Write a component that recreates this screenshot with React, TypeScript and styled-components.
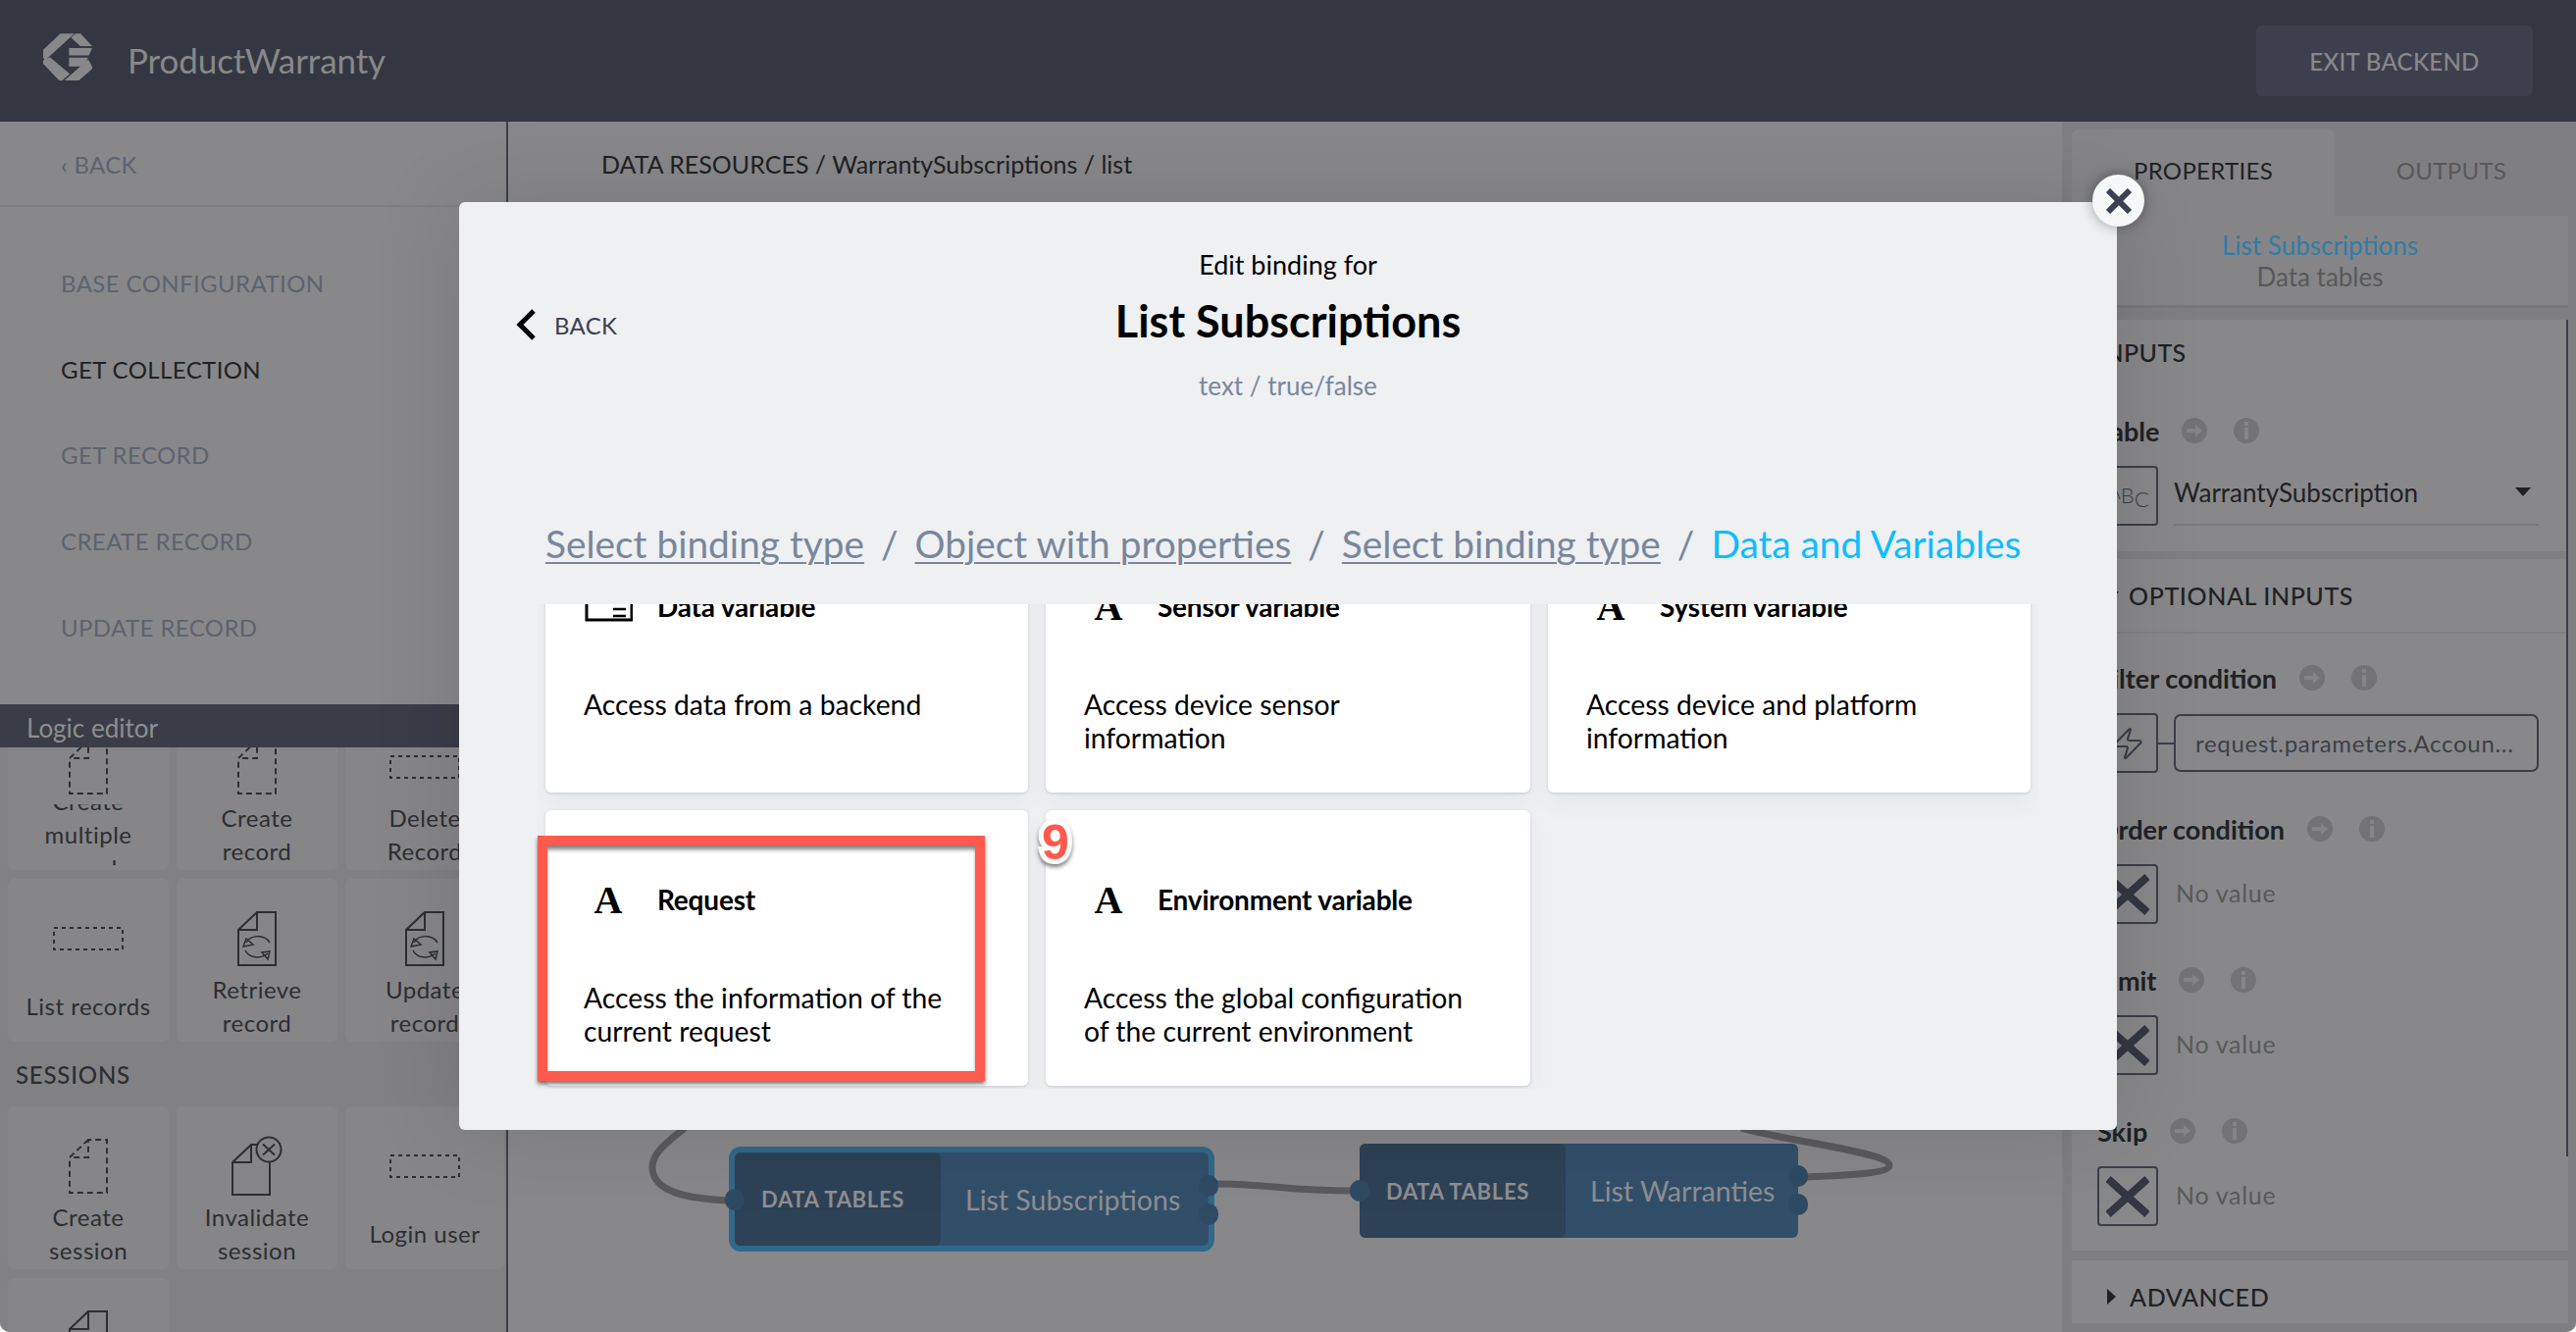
import React from 'react';
import styled, { createGlobalStyle } from 'styled-components';
import { Zap } from 'lucide-react';

const Global = createGlobalStyle`
  html, body { margin: 0; padding: 0; background: #fff; }
  * { box-sizing: border-box; }
  body { font-family: Lato, "Liberation Sans", sans-serif; }
`;

const Page = styled.div`
  position: relative; width: 2626px; height: 1358px; overflow: hidden;
  display: flex; flex-direction: column; background: #88888a;
  border-radius: 0 0 10px 10px; color: #202124;
`;
const Header = styled.header`
  height: 124px; flex: none; background: #343741; display: flex; align-items: center;
  padding: 0 44px 0 42px;
`;
const LogoMark = styled.svg`margin-top: -8px; flex: none; display: block;`;
const Brand = styled.div`font-size: 35px; color: #88888a; margin-left: 34px; letter-spacing: -0.1px; flex: 1; padding-bottom: 2px;`;
const ExitButton = styled.div`
  width: 282px; height: 72px; border-radius: 6px; background: #3d404c; color: #88888a;
  display: flex; align-items: center; justify-content: center; font-size: 24px; letter-spacing: .3px; font-weight: 500;
`;
const Body = styled.div`display: flex; flex: 1; min-height: 0;`;
const Sidebar = styled.aside`
  width: 518px; flex: none; display: flex; flex-direction: column; border-right: 2px solid #3d404c;
`;
const SideNav = styled.nav`height: 594px; flex: none; overflow: hidden;`;
const SideBack = styled.div`
  height: 87px; border-bottom: 2px solid #7f7f81; padding: 2px 0 0 62px; display: flex; align-items: center;
  font-size: 24px; color: #5d626f; letter-spacing: .3px; margin-bottom: 34px;
`;
const SideItem = styled.div<{ $active?: boolean }>`
  height: 87.6px; padding-left: 62px; display: flex; align-items: center; font-size: 24px; letter-spacing: .4px;
  color: ${p => (p.$active ? '#202124' : '#5d626f')};
`;
const LogicBar = styled.div`
  height: 44px; flex: none; background: #3a3d47; color: #8e8e90; font-size: 26px; padding: 3px 0 0 27px;
  display: flex; align-items: center; position: relative; z-index: 1;
`;
const ToolArea = styled.div`flex: 1; min-height: 0; overflow: hidden; background: #818183; padding-left: 8px;`;
const ToolInner = styled.div`margin-top: -41px;`;
const ToolGrid = styled.div`display: grid; grid-template-columns: 164px 164px 162px; gap: 9px 8px;`;
const Tile = styled.div`
  height: 166px; background: #868688; border-radius: 6px; padding-top: 33px;
  display: flex; flex-direction: column; align-items: center;
`;
const TileIcon = styled.div`
  height: 55px; flex: none; display: flex; align-items: center; justify-content: center;
  svg { display: block; overflow: visible; flex: none; }
`;
const TileLabel = styled.div`
  height: 62px; margin-top: 11px; width: 100%; overflow: hidden; display: flex; align-items: center; justify-content: center;
  text-align: center; font-size: 24px; line-height: 34px; color: #2c2e33; letter-spacing: .5px; padding: 0 10px;
`;
const ToolHeading = styled.div`
  height: 66px; display: flex; align-items: center; padding-left: 8px; font-size: 24px; letter-spacing: .8px;
  color: #2c2e33; font-weight: 500;
`;

const Canvas = styled.main`flex: 1; position: relative; min-width: 0; overflow: hidden;`;
const Crumb = styled.div`padding: 28px 0 0 95px; font-size: 25px; line-height: 30px; color: #202124;`;
const Wires = styled.svg`position: absolute; left: 0; top: 0; width: 1584px; height: 1234px;`;
const NodeBox = styled.div<{ $x: number; $y: number; $w: number; $h: number; $sel?: boolean }>`
  position: absolute; left: ${p => p.$x}px; top: ${p => p.$y}px; width: ${p => p.$w}px; height: ${p => p.$h}px;
  display: flex; background: #324f6a; border-radius: 6px;
  ${p => p.$sel && 'box-shadow: 0 0 0 6px #32688a;'}
`;
const NodeKind = styled.div`
  width: 210px; flex: none; background: #2d4257; border-radius: 6px; display: flex; align-items: center; justify-content: center;
  color: #8e8e90; font-size: 22px; font-weight: 700; letter-spacing: .7px; padding-right: 10px;
`;
const NodeName = styled.div`flex: 1; display: flex; align-items: center; padding-left: 25px; color: #8e8e90; font-size: 28.5px;`;
const Port = styled.span<{ $side: 'l' | 'r'; $y: number }>`
  position: absolute; ${p => (p.$side === 'l' ? 'left: -10px;' : 'right: -10px;')} top: ${p => p.$y}px;
  width: 20px; height: 22px; border-radius: 10px; background: #2f4a63;
`;

const Right = styled.aside`
  width: 524px; flex: none; background: #7f7f81; padding: 8px 8px 9px 10px; display: flex; flex-direction: column; position: relative;
`;
const Tabs = styled.div`display: flex; height: 88px; flex: none;`;
const Tab = styled.div<{ $on?: boolean }>`
  flex: ${p => (p.$on ? '0 0 268px' : '1')}; display: flex; align-items: center; justify-content: center;
  padding-bottom: 6px; font-size: 24px; letter-spacing: .3px; border-radius: 6px 6px 0 0;
  background: ${p => (p.$on ? '#858587' : 'transparent')}; color: ${p => (p.$on ? '#202124' : '#58585a')};
`;
const SubHead = styled.div`
  height: 94px; flex: none; background: #858587; border-bottom: 3px solid #79797b; display: flex; flex-direction: column;
  align-items: center; justify-content: center; font-size: 26px; line-height: 32px; color: #58585a;
`;
const SubLink = styled.div`color: #337ba6;`;
const Section = styled.section<{ $mt: number; $h: number }>`
  margin-top: ${p => p.$mt}px; height: ${p => p.$h}px; flex: none; background: #88888a; padding: 0 0 0 26px;
`;
const SectionTitle = styled.div`
  height: 34px; margin-top: 16px; display: flex; align-items: center; font-size: 25px; letter-spacing: .4px;
  font-weight: 500;
`;
const SectionHead = styled.div`
  height: 76px; margin: 0 0 30px -26px; padding-left: 32px; border-bottom: 2px solid #808082; display: flex; align-items: center; gap: 10px;
  font-size: 25px; letter-spacing: .6px; font-weight: 500;
`;
const AdvancedHead = styled.div`
  height: 74px; margin-left: -26px; padding-left: 36px; display: flex; align-items: center; gap: 14px;
  font-size: 25px; letter-spacing: .6px; font-weight: 500;
`;
const Caret = styled.span<{ $open?: boolean }>`
  width: 0; height: 0; flex: none;
  ${p => p.$open
    ? 'border-left: 8px solid transparent; border-right: 8px solid transparent; border-top: 9px solid #202124;'
    : 'border-top: 8px solid transparent; border-bottom: 8px solid transparent; border-left: 9px solid #202124;'}
`;
const Field = styled.div<{ $top?: number }>`margin-top: ${p => p.$top ?? 0}px; margin-bottom: 42px;`;
const FieldLabel = styled.div`
  height: 30px; display: flex; align-items: center; gap: 23px; font-size: 27px; font-weight: 700; color: #202124; margin-bottom: 21px;
  svg { display: block; }
`;
const LabelIcons = styled.span`display: flex; gap: 27px;`;
const FieldRow = styled.div`display: flex; align-items: center; height: 61px;`;
const IconBox = styled.div`
  width: 62px; height: 61px; flex: none; border: 2px solid #3b3e49; border-radius: 4px; display: flex; align-items: center; justify-content: center;
  color: #3b3e49;
`;
const Abc = styled.span`display: flex; font-size: 22px; font-weight: 300; color: #3b3e49;`;
const AbcLetter = styled.span<{ $dy: number }>`transform: translateY(${p => p.$dy}px);`;
const Connector = styled.span`width: 16px; height: 2px; background: #3b3e49; flex: none;`;
const SelectBox = styled.div`
  width: 372px; height: 61px; margin-left: 16px; border-bottom: 2px solid #79797b; display: flex; align-items: center; justify-content: space-between;
  font-size: 26px; color: #202124; padding: 0 8px 6px 0;
`;
const ValueBox = styled.div`
  width: 372px; height: 59px; border: 2px solid #3b3e49; border-radius: 7px; display: flex; align-items: center; padding: 0 20px;
  font-size: 24px; color: #3c3f48; letter-spacing: .7px; white-space: nowrap; overflow: hidden;
`;
const NoValue = styled.div`margin-left: 18px; font-size: 25px; color: #58585a; letter-spacing: .7px; padding-bottom: 4px;`;
const Scrollbar = styled.span`position: absolute; left: 514px; top: 202px; width: 2px; height: 853px; background: #3b3e49;`;

const Modal = styled.div`
  position: absolute; left: 468px; top: 206px; width: 1690px; height: 946px; background: #eff0f2; border-radius: 6px;
  box-shadow: 0 0 90px rgba(0,0,0,.13); display: flex; flex-direction: column; padding: 50px 88px 0; z-index: 2;
`;
const ModalHead = styled.div`display: grid; grid-template-columns: 1fr auto 1fr; align-items: start; height: 151px;`;
const ModalBack = styled.div`
  display: flex; align-items: center; gap: 19px; margin: 59px 0 0 -30px; font-size: 24px; color: #3a4050; letter-spacing: .3px; height: 32px;
`;
const ModalCenter = styled.div`display: flex; flex-direction: column; align-items: center; text-align: center;`;
const ModalEdit = styled.div`font-size: 27px; line-height: 28px; color: #000;`;
const ModalTitle = styled.div`font-size: 45px; line-height: 50px; margin-top: 18px; color: #000; font-weight: 700;`;
const ModalSub = styled.div`font-size: 26px; line-height: 30px; margin-top: 26px; color: #78879c;`;
const Trail = styled.div`
  margin-top: 122px; height: 50px; display: flex; align-items: center; font-size: 38.8px; white-space: nowrap; color: #78879c; gap: 17px;
`;
const TrailLink = styled.span`text-decoration: underline; text-decoration-thickness: 2px; text-underline-offset: 4px;`;
const TrailNow = styled.span`color: #0ebcff;`;
const Scroll = styled.div`height: 494px; margin-top: 37px; overflow: hidden; width: 1530px; padding-right: 16px; flex: none; margin-left: -8px; padding-left: 8px;`;
const CardGrid = styled.div`
  margin-top: -89px; display: grid; grid-template-columns: 492px 494px 492px; gap: 18px; width: 1514px;
`;
const Card = styled.div`
  height: 281px; background: #fff; border-radius: 6px; padding: 76px 60px 0 39px;
  box-shadow: 0 1px 3px rgba(60,70,90,.18), 0 12px 24px rgba(60,70,90,.05);
`;
const CardHead = styled.div`display: flex; align-items: center; height: 30px; gap: 25px;`;
const CardIcon = styled.div`
  width: 50px; flex: none; height: 30px; display: flex; align-items: center; justify-content: center;
  font-family: "Liberation Serif", serif; font-weight: 700; font-size: 40px; color: #000;
  svg { display: block; }
`;
const CardTitle = styled.div`font-size: 28px; font-weight: 700; color: #000; letter-spacing: -.2px;`;
const CardDesc = styled.div`margin-top: 68px; font-size: 28.3px; line-height: 34px; color: #000;`;

const Callout = styled.div`
  position: absolute; left: 548px; top: 852px; width: 456px; height: 250px; border: 10px solid #ff5a4d; z-index: 3;
  box-shadow: 0 3px 4px rgba(0,0,0,.55), inset 0 5px 4px -1px rgba(0,0,0,.5);
`;
const CalloutNum = styled.div`
  position: absolute; left: 1051px; top: 829px; width: 50px; text-align: center; z-index: 3; font-family: "Liberation Sans", sans-serif;
  font-weight: 700; font-size: 50px; line-height: 60px; color: #ff5a4d; -webkit-text-stroke: 10px #fff; paint-order: stroke fill;
  filter: drop-shadow(0 3px 2px rgba(0,0,0,.5));
`;
const Close = styled.div`
  position: absolute; left: 2133px; top: 178px; width: 53px; height: 53px; border-radius: 50%; background: #f6f7f8; z-index: 4;
  box-shadow: 0 0 14px rgba(0,0,0,.35); display: flex; align-items: center; justify-content: center;
`;

const Logo = () => (
  <LogoMark width="54" height="52" viewBox="36 30 160 166" preserveAspectRatio="none" fill="#88888a">
    <polygon points="42,90 94,37 136,37 48,124 42,116" />
    <polygon points="42,124 62,114 122,168 100,190 90,190 42,135" />
    <polygon points="126,50 140,37 155,37 190,78 154,78" />
    <polygon points="120,84 190,84 180,108 120,108" />
    <polygon points="120,115 178,115 165,144 120,144" />
    <polygon points="106,190 178,122 190,145 190,152 150,190" />
  </LogoMark>
);
const docPath = 'M20 1 L1 19 V55 H39 V1 H20 V19 H1';
const DocDashed = () => (
  <svg width="40" height="56" viewBox="0 0 40 56" fill="none" stroke="#2c2e33" strokeWidth="2" strokeDasharray="6 4"><path d={docPath} /></svg>
);
const DocSolid = () => (
  <svg width="40" height="56" viewBox="0 0 40 56" fill="none" stroke="#2c2e33" strokeWidth="2"><path d={docPath} /></svg>
);
const RectDashed = () => (
  <svg width="72" height="24" viewBox="0 0 72 24" fill="none" stroke="#2c2e33" strokeWidth="2" strokeDasharray="4 4"><rect x="1" y="1" width="70" height="22" /></svg>
);
const DocSync = () => (
  <svg width="40" height="56" viewBox="0 0 40 56" fill="none" stroke="#2c2e33" strokeWidth="2">
    <path d={docPath} />
    <g strokeWidth="1.5">
      <path d="M9 32 C13 24 27 23 33 32" />
      <path d="M8 40 C12 48 24 49 31 43" />
      <path d="M6 36 L9 28 L16 34 Z" />
      <path d="M25 42 L33 41 L31 49 Z" />
    </g>
  </svg>
);
const DocX = () => (
  <svg width="52" height="60" viewBox="0 0 52 60" fill="none" stroke="#2c2e33" strokeWidth="2">
    <path d="M20 8 L1 26 V59 H39 V8 H20 V26 H1" />
    <circle cx="38" cy="13" r="12.5" fill="#868688" />
    <path d="M32 7.5 L44 18.5 M44 7.5 L32 18.5" />
  </svg>
);
const ArrowCircle = () => (
  <svg width="26" height="26" viewBox="0 0 26 26"><circle cx="13" cy="13" r="13" fill="#737375" /><path d="M5 11 H14 V7 L21 13 L14 19 V15 H5 Z" fill="#858587" /></svg>
);
const InfoCircle = () => (
  <svg width="26" height="26" viewBox="0 0 26 26"><circle cx="13" cy="13" r="13" fill="#737375" /><rect x="11" y="10" width="4" height="12" fill="#858587" /><rect x="11" y="4" width="4" height="4" fill="#858587" /></svg>
);
const CrossMark = () => (
  <svg width="44" height="42" viewBox="0 0 44 42" fill="none" stroke="#343741" strokeWidth="8"><path d="M2 3 L42 39 M42 3 L2 39" /></svg>
);
const ChevronLeft = () => (
  <svg width="20" height="32" viewBox="0 0 20 32" fill="none" stroke="#000" strokeWidth="5"><path d="M18 2 L4 16 L18 30" /></svg>
);
const CloseGlyph = () => (
  <svg width="26" height="26" viewBox="0 0 26 26" fill="none" stroke="#3a4150" strokeWidth="6"><path d="M2 2 L24 24 M24 2 L2 24" /></svg>
);
const DataVarIcon = () => (
  <svg width="50" height="32" viewBox="0 0 50 32" fill="none" stroke="#000" strokeWidth="3">
    <path d="M3 0 V30 H49 V0" /><path d="M30 19 H43 M30 26 H43" strokeWidth="2.5" />
  </svg>
);

const tools1: [React.ReactNode, string][] = [
  [<DocDashed />, 'Create multiple records'],
  [<DocDashed />, 'Create record'],
  [<RectDashed />, 'Delete Record'],
  [<RectDashed />, 'List records'],
  [<DocSync />, 'Retrieve record'],
  [<DocSync />, 'Update record'],
];
const tools2: [React.ReactNode, string][] = [
  [<DocDashed />, 'Create session'],
  [<DocX />, 'Invalidate session'],
  [<RectDashed />, 'Login user'],
  [<DocSolid />, ''],
];
const cards: [React.ReactNode, string, string][] = [
  [<DataVarIcon />, 'Data variable', 'Access data from a backend'],
  ['A', 'Sensor variable', 'Access device sensor information'],
  ['A', 'System variable', 'Access device and platform information'],
  ['A', 'Request', 'Access the information of the current request'],
  ['A', 'Environment variable', 'Access the global configuration of the current environment'],
];

const FieldTitle = ({ children }: { children: React.ReactNode }) => (
  <FieldLabel>{children}<LabelIcons><ArrowCircle /><InfoCircle /></LabelIcons></FieldLabel>
);
const EmptyField = ({ label }: { label: string }) => (
  <Field>
    <FieldTitle>{label}</FieldTitle>
    <FieldRow><IconBox><CrossMark /></IconBox><NoValue>No value</NoValue></FieldRow>
  </Field>
);

export default function App() {
  return (
    <Page>
      <Global />
      <Header>
        <Logo />
        <Brand>ProductWarranty</Brand>
        <ExitButton>EXIT BACKEND</ExitButton>
      </Header>
      <Body>
        <Sidebar>
          <SideNav>
            <SideBack>‹ BACK</SideBack>
            <SideItem>BASE CONFIGURATION</SideItem>
            <SideItem $active>GET COLLECTION</SideItem>
            <SideItem>GET RECORD</SideItem>
            <SideItem>CREATE RECORD</SideItem>
            <SideItem>UPDATE RECORD</SideItem>
            <SideItem>DELETE RECORD</SideItem>
          </SideNav>
          <LogicBar>Logic editor</LogicBar>
          <ToolArea>
            <ToolInner>
              <ToolGrid>
                {tools1.map(([icon, label], i) => (
                  <Tile key={i}><TileIcon>{icon}</TileIcon><TileLabel>{label}</TileLabel></Tile>
                ))}
              </ToolGrid>
              <ToolHeading>SESSIONS</ToolHeading>
              <ToolGrid>
                {tools2.map(([icon, label], i) => (
                  <Tile key={i}><TileIcon>{icon}</TileIcon><TileLabel>{label}</TileLabel></Tile>
                ))}
              </ToolGrid>
            </ToolInner>
          </ToolArea>
        </Sidebar>
        <Canvas>
          <Crumb>DATA RESOURCES / WarrantySubscriptions / list</Crumb>
          <Wires viewBox="0 0 1584 1234" fill="none" stroke="#5a5a5c" strokeWidth="7">
            <g transform="translate(-518 -124)">
              <path d="M743 1224 C700 1222 665 1215 665 1190 C665 1175 680 1165 698 1150" />
              <path d="M1240 1207 C1300 1207 1310 1215 1390 1214" />
              <path d="M1840 1200 C1890 1198 1926 1196 1926 1188 C1926 1175 1830 1165 1775 1150" />
            </g>
          </Wires>
          <NodeBox $x={231} $y={1051} $w={483} $h={95} $sel>
            <NodeKind>DATA TABLES</NodeKind>
            <NodeName>List Subscriptions</NodeName>
            <Port $side="l" $y={37} />
            <Port $side="r" $y={23} />
            <Port $side="r" $y={52} />
          </NodeBox>
          <NodeBox $x={868} $y={1042} $w={447} $h={96}>
            <NodeKind>DATA TABLES</NodeKind>
            <NodeName>List Warranties</NodeName>
            <Port $side="l" $y={37} />
            <Port $side="r" $y={22} />
            <Port $side="r" $y={51} />
          </NodeBox>
        </Canvas>
        <Right>
          <Tabs>
            <Tab $on>PROPERTIES</Tab>
            <Tab>OUTPUTS</Tab>
          </Tabs>
          <SubHead>
            <SubLink>List Subscriptions</SubLink>
            <div>Data tables</div>
          </SubHead>
          <Section $mt={12} $h={236}>
            <SectionTitle>INPUTS</SectionTitle>
            <Field $top={48}>
              <FieldTitle>Table</FieldTitle>
              <FieldRow>
                <IconBox>
                  <Abc><AbcLetter $dy={-5}>A</AbcLetter><AbcLetter $dy={-1}>B</AbcLetter><AbcLetter $dy={3}>C</AbcLetter></Abc>
                </IconBox>
                <SelectBox>WarrantySubscription<Caret $open /></SelectBox>
              </FieldRow>
            </Field>
          </Section>
          <Section $mt={8} $h={705}>
            <SectionHead><Caret $open />OPTIONAL INPUTS</SectionHead>
            <Field>
              <FieldTitle>Filter condition</FieldTitle>
              <FieldRow>
                <IconBox><Zap size={36} strokeWidth={1.4} /></IconBox>
                <Connector />
                <ValueBox>request.parameters.Accoun...</ValueBox>
              </FieldRow>
            </Field>
            <EmptyField label="Order condition" />
            <EmptyField label="Limit" />
            <EmptyField label="Skip" />
          </Section>
          <Section $mt={10} $h={64}>
            <AdvancedHead><Caret />ADVANCED</AdvancedHead>
          </Section>
          <Scrollbar />
        </Right>
      </Body>
      <Modal>
        <ModalHead>
          <ModalBack><ChevronLeft />BACK</ModalBack>
          <ModalCenter>
            <ModalEdit>Edit binding for</ModalEdit>
            <ModalTitle>List Subscriptions</ModalTitle>
            <ModalSub>text / true/false</ModalSub>
          </ModalCenter>
        </ModalHead>
        <Trail>
          <TrailLink>Select binding type</TrailLink><span>/</span>
          <TrailLink>Object with properties</TrailLink><span>/</span>
          <TrailLink>Select binding type</TrailLink><span>/</span>
          <TrailNow>Data and Variables</TrailNow>
        </Trail>
        <Scroll>
          <CardGrid>
            {cards.map(([icon, title, desc]) => (
              <Card key={title}>
                <CardHead><CardIcon>{icon}</CardIcon><CardTitle>{title}</CardTitle></CardHead>
                <CardDesc>{desc}</CardDesc>
              </Card>
            ))}
          </CardGrid>
        </Scroll>
      </Modal>
      <Callout />
      <CalloutNum>9</CalloutNum>
      <Close><CloseGlyph /></Close>
    </Page>
  );
}
